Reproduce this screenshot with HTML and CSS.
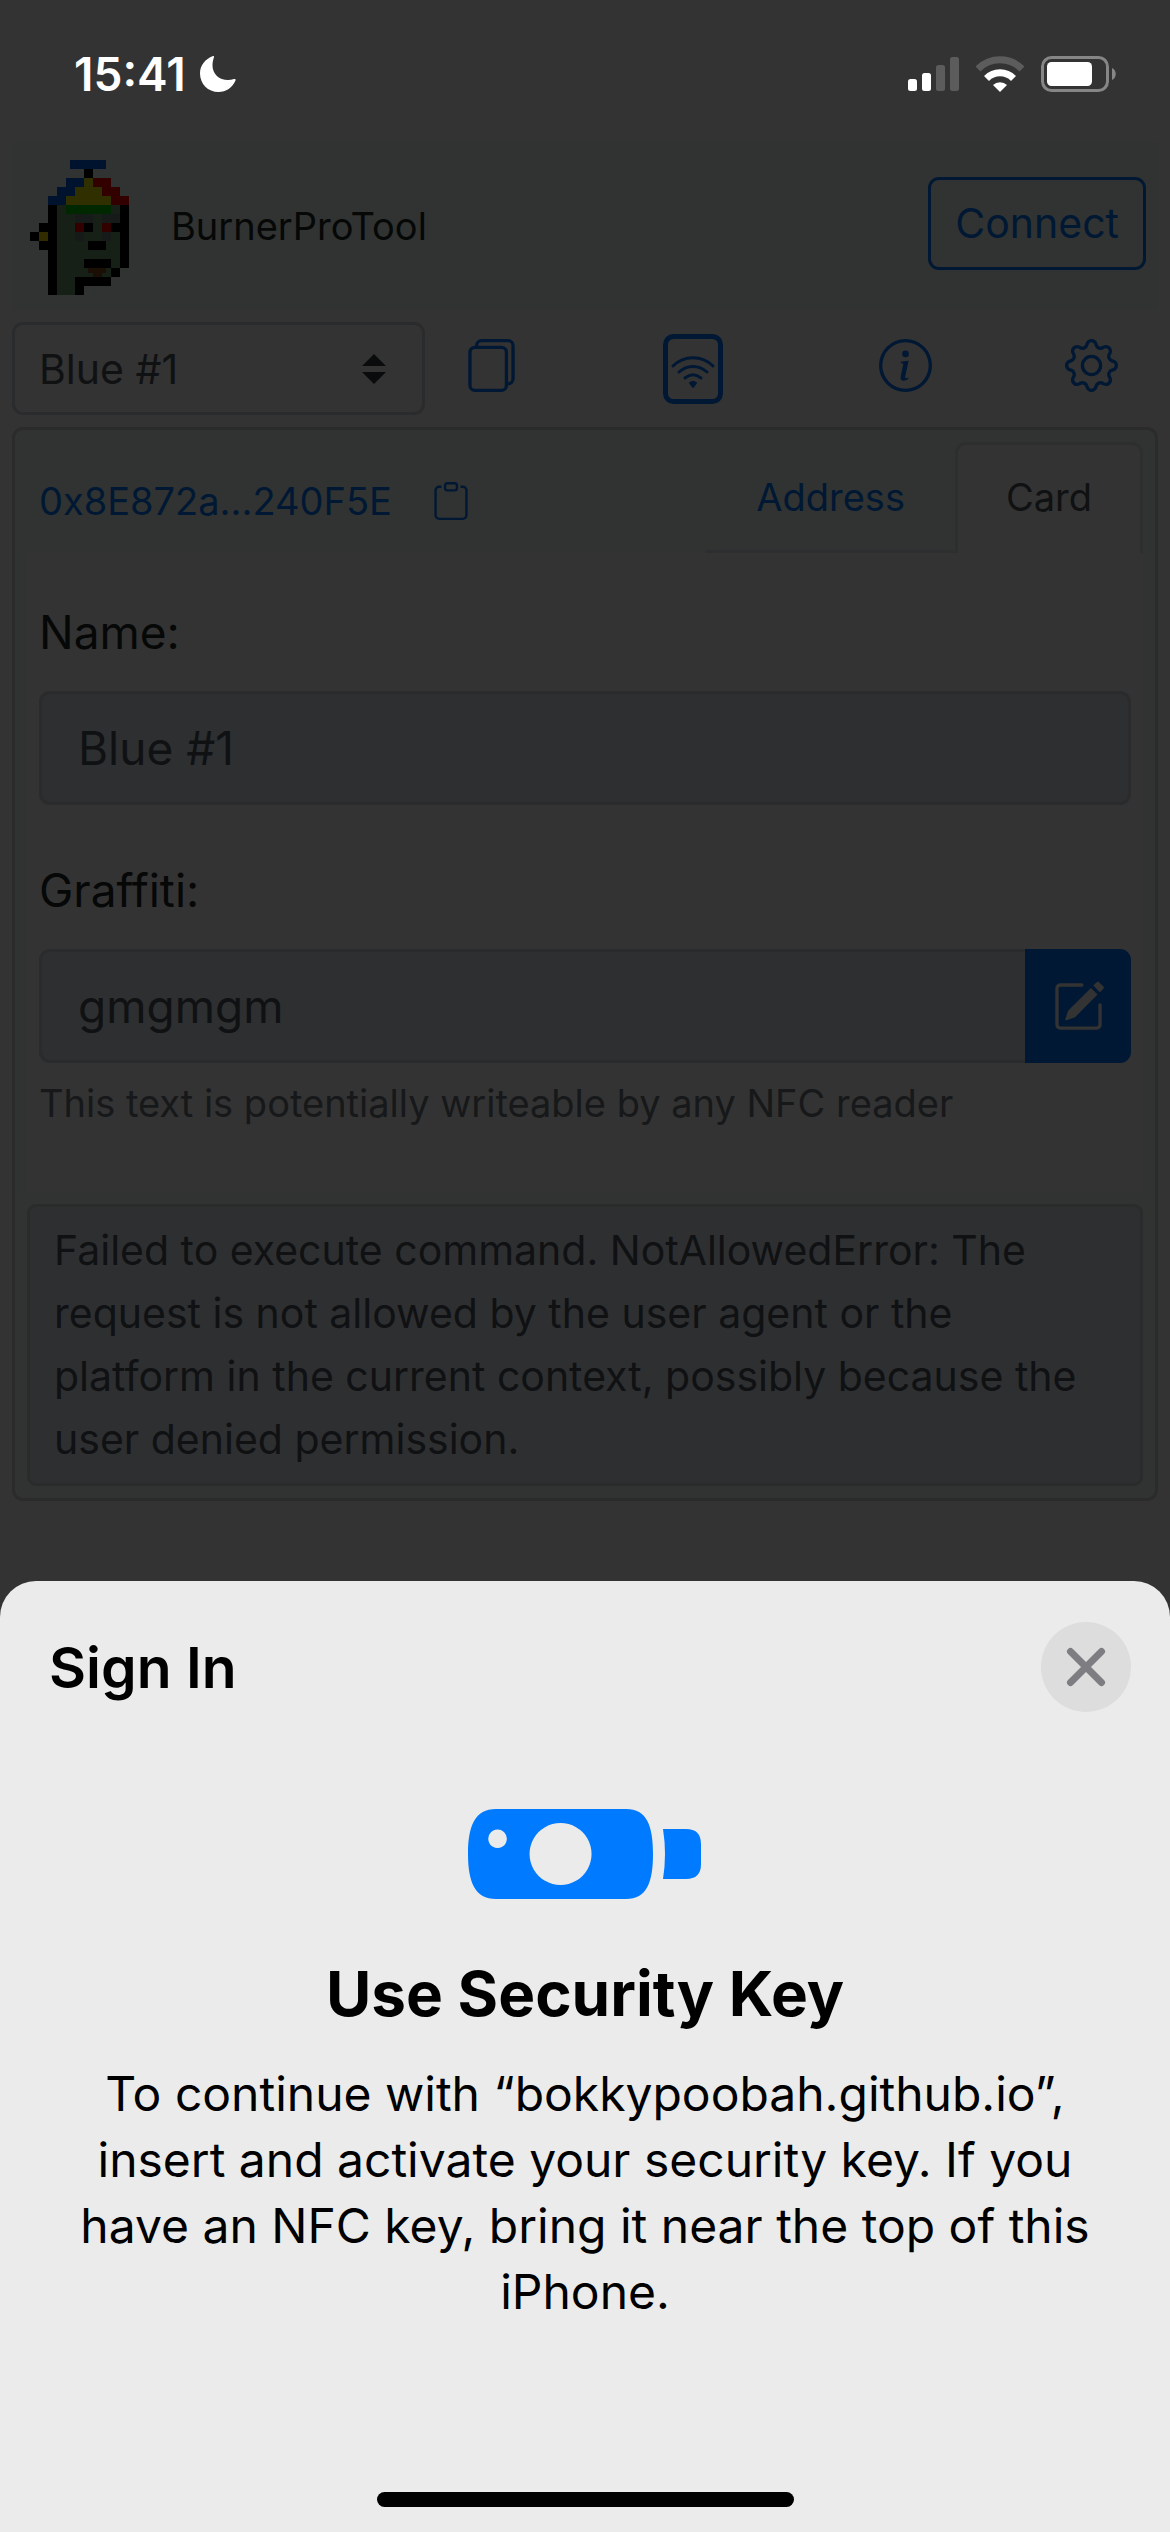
FILE: index.html
```html
<!DOCTYPE html>
<html lang="en">
<head>
<meta charset="utf-8">
<meta name="viewport" content="width=device-width, initial-scale=1">
<title>BurnerProTool</title>
<link rel="stylesheet" href="styles.css">
</head>
<body>
<div class="statusbar">
  <div class="clock">
    <span>15:41</span>
    <svg class="moon" viewBox="0 0 36 36" aria-hidden="true"><path d="M13 0C5 3 0 9.500 0 17.500C0 28 8 36 18.500 36C26 36 32.500 31.500 35.500 24.500c.5-1.200-.2-1.800-1.500-1.400c-2 .6-4 .9-6 .9C19 24 12.500 18 12.500 9.500c0-3 .6-5.500 1.300-7.700.4-1.400.2-2.100-.8-1.800z"/></svg>
  </div>
  <div class="indicators">
    <svg class="signal" viewBox="0 0 51 34" aria-hidden="true">
      <rect x="0" y="22" width="9" height="12" rx="2.500" fill="#fff"/>
      <rect x="14" y="16" width="9" height="18" rx="2.500" fill="#fff"/>
      <rect x="28" y="8" width="9" height="26" rx="2.500" fill="#5c5c5c"/>
      <rect x="42" y="0" width="9" height="34" rx="2.500" fill="#5c5c5c"/>
    </svg>
    <svg class="wifi" viewBox="0 0 48 36" aria-hidden="true">
      <path d="M2 13A31 31 0 0 1 46 13" fill="none" stroke="#5c5c5c" stroke-width="7"/>
      <path d="M10.500 22.500A19 19 0 0 1 37.500 22.500" fill="none" stroke="#fff" stroke-width="7"/>
      <path d="M24 36l-7-7a10 10 0 0 1 14 0z" fill="#fff"/>
    </svg>
    <svg class="battery" viewBox="0 0 75 36" aria-hidden="true">
      <rect x="1.500" y="1.500" width="65" height="33" rx="9" fill="none" stroke="#868686" stroke-width="3"/>
      <rect x="6" y="6" width="45" height="24" rx="4.500" fill="#fff"/>
      <path d="M71 12c5 2 5 10 0 12z" fill="#868686"/>
    </svg>
  </div>
</div>

<main class="app">
  <header class="topbar">
    <svg class="logo" viewBox="30 30 297 405" shape-rendering="crispEdges" role="img" aria-label="Logo">
      <path fill="#172017" d="M111 165h189v189h-27v27H165v54h-54z"/>
      <path fill="#161b19" d="M165 192h54v27h-54zM246 192h54v27h-54zM165 246h27v27h-27zM246 246h27v27h-27z"/>
      <path fill="#00132e" d="M150 30h108v27H150zM138 84h54v27h-54zM111 111h54v27h-54zM84 138h54v27H84z"/>
      <path fill="#2f2f00" d="M192 84h27v27h-27zM165 111h81v27h-81zM138 138h135v27H138z"/>
      <path fill="#330000" d="M219 84h54v27h-54zM246 111h54v27h-54zM273 138h54v27h-54zM165 219h27v27h-27zM246 219h27v27h-27z"/>
      <path fill="#002800" d="M138 165h135v27H138z"/>
      <path fill="#332b00" d="M57 246h27v27H57z"/>
      <path fill="#1b0e04" d="M204 354h54v15h-12v12h-27v-12h-15z"/>
      <path fill="#000" d="M192 57h27v27h-27zM84 165h27v270H84zM300 165h27v189h-27zM57 219h27v27H57zM30 246h27v27H30zM57 273h27v27H57zM192 219h27v27h-27zM273 219h27v27h-27zM204 273h54v27h-54zM192 327h81v27h-81zM273 354h27v27h-27zM165 381h108v27h-81v27h-27z"/>
    </svg>
    <span class="brand">BurnerProTool</span>
    <button class="connect" type="button">Connect</button>
  </header>

  <nav class="toolbar" aria-label="Tools">
    <div class="picker">
      <select aria-label="Card">
        <option>Blue #1</option>
      </select>
      <svg class="arrows" viewBox="0 0 24 30" aria-hidden="true"><path d="M12 0l12 12H0zM0 18h24L12 30z"/></svg>
    </div>
    <div class="tools">
      <button class="tool" type="button" aria-label="Cards"><svg class="icon icon-lines" viewBox="0 0 16 16"><rect x="1.500" y="2.500" width="11" height="13" rx="1.500"/><path d="M3.500 2.500V2A1.500 1.500 0 0 1 5 .5h8A1.500 1.500 0 0 1 14.500 2v10a1.500 1.500 0 0 1-1.500 1.500"/></svg></button>
      <button class="tool" type="button" aria-label="Scan"><svg class="icon-scan" viewBox="0 0 60 70" fill="none" stroke="#001833"><rect x="2.500" y="2.500" width="55" height="65" rx="8" stroke-width="5"/><path d="M10 32C21 21 39 21 50 32M16 38c8-7.500 20-7.500 28 0M22 44c5-4 11-4 16 0" stroke-width="3" stroke-linecap="round"/><path d="M27 49q3-2 6 0l-3 4z" fill="#001833" stroke-width="2" stroke-linejoin="round"/></svg></button>
      <button class="tool" type="button" aria-label="Info"><svg class="icon" viewBox="0 0 16 16"><path d="M8 15A7 7 0 1 1 8 1a7 7 0 0 1 0 14zm0 1A8 8 0 1 0 8 0a8 8 0 0 0 0 16z"/><path d="m8.930 6.588-2.290.287-.082.380.450.083c.294.070.352.176.288.469l-.738 3.468c-.194.897.105 1.319.808 1.319.545 0 1.178-.252 1.465-.598l.088-.416c-.2.176-.492.246-.686.246-.275 0-.375-.193-.304-.533L8.930 6.588zM9 4.500a1 1 0 1 1-2 0 1 1 0 0 1 2 0z"/></svg></button>
      <button class="tool" type="button" aria-label="Settings"><svg class="icon" viewBox="0 0 16 16"><path d="M8 4.754a3.246 3.246 0 1 0 0 6.492 3.246 3.246 0 0 0 0-6.492zM5.754 8a2.246 2.246 0 1 1 4.492 0 2.246 2.246 0 0 1-4.492 0z"/><path d="M9.796 1.343c-.527-1.790-3.065-1.790-3.592 0l-.094.319a.873.873 0 0 1-1.255.520l-.292-.160c-1.640-.892-3.433.902-2.540 2.541l.159.292a.873.873 0 0 1-.520 1.255l-.319.094c-1.790.527-1.790 3.065 0 3.592l.319.094a.873.873 0 0 1 .520 1.255l-.160.292c-.892 1.640.901 3.434 2.541 2.540l.292-.159a.873.873 0 0 1 1.255.520l.094.319c.527 1.790 3.065 1.790 3.592 0l.094-.319a.873.873 0 0 1 1.255-.520l.292.160c1.640.893 3.434-.902 2.540-2.541l-.159-.292a.873.873 0 0 1 .520-1.255l.319-.094c1.790-.527 1.790-3.065 0-3.592l-.319-.094a.873.873 0 0 1-.520-1.255l.160-.292c.893-1.640-.902-3.433-2.541-2.540l-.292.159a.873.873 0 0 1-1.255-.520l-.094-.319zm-2.633.283c.246-.835 1.428-.835 1.674 0l.094.319a1.873 1.873 0 0 0 2.693 1.115l.291-.160c.764-.415 1.600.420 1.184 1.185l-.159.292a1.873 1.873 0 0 0 1.116 2.692l.318.094c.835.246.835 1.428 0 1.674l-.319.094a1.873 1.873 0 0 0-1.115 2.693l.160.291c.415.764-.420 1.600-1.185 1.184l-.291-.159a1.873 1.873 0 0 0-2.693 1.116l-.094.318c-.246.835-1.428.835-1.674 0l-.094-.319a1.873 1.873 0 0 0-2.692-1.115l-.292.160c-.764.415-1.600-.420-1.184-1.185l.159-.291A1.873 1.873 0 0 0 1.945 8.930l-.319-.094c-.835-.246-.835-1.428 0-1.674l.319-.094A1.873 1.873 0 0 0 3.060 4.377l-.160-.292c-.415-.764.420-1.600 1.185-1.184l.292.159a1.873 1.873 0 0 0 2.692-1.115l.094-.319z"/></svg></button>
    </div>
  </nav>

  <section class="card">
    <div class="card-head">
      <a class="address" href="#address">0x8E872a...240F5E</a>
      <button class="tool" type="button" aria-label="Copy address"><svg class="icon-small" viewBox="0 0 16 16"><path d="M4 1.500H3a2 2 0 0 0-2 2V14a2 2 0 0 0 2 2h10a2 2 0 0 0 2-2V3.500a2 2 0 0 0-2-2h-1v1h1a1 1 0 0 1 1 1V14a1 1 0 0 1-1 1H3a1 1 0 0 1-1-1V3.500a1 1 0 0 1 1-1h1v-1z"/><path d="M9.500 1a.5.5 0 0 1 .5.5v1a.5.5 0 0 1-.5.5h-3a.5.5 0 0 1-.5-.5v-1a.5.5 0 0 1 .5-.5h3zm-3-1A1.500 1.500 0 0 0 5 1.500v1A1.500 1.500 0 0 0 6.500 4h3A1.500 1.500 0 0 0 11 2.500v-1A1.500 1.500 0 0 0 9.500 0h-3z"/></svg></button>
      <div class="tabs">
        <a class="tab" href="#address">Address</a>
        <a class="tab tab-active" href="#card" aria-current="page">Card</a>
      </div>
    </div>
    <form class="card-body">
      <label class="label" for="name">Name:</label>
      <input class="field" id="name" type="text" value="Blue #1" readonly>
      <label class="label" for="graffiti">Graffiti:</label>
      <div class="group">
        <input class="field" id="graffiti" type="text" value="gmgmgm" readonly aria-describedby="hint">
        <button class="edit" type="button" aria-label="Edit graffiti"><svg class="icon" viewBox="0 0 16 16"><path d="M15.502 1.940a.5.5 0 0 1 0 .706L14.459 3.690l-2-2L13.502.646a.5.5 0 0 1 .707 0l1.293 1.293zm-1.750 2.456-2-2L4.939 9.210a.5.5 0 0 0-.121.196l-.805 2.414a.25.25 0 0 0 .316.316l2.414-.805a.5.5 0 0 0 .196-.120l6.813-6.814z"/><path d="M1 13.500A1.500 1.500 0 0 0 2.500 15h11a1.500 1.500 0 0 0 1.500-1.500v-6a.5.5 0 0 0-1 0v6a.5.5 0 0 1-.5.5h-11a.5.5 0 0 1-.5-.5v-11a.5.5 0 0 1 .5-.5H9a.5.5 0 0 0 0-1H2.500A1.500 1.500 0 0 0 1 2.500v11z"/></svg></button>
      </div>
      <p class="hint" id="hint">This text is potentially writeable by any NFC reader</p>
    </form>
    <p class="alert" role="alert">Failed to execute command. NotAllowedError: The request is not allowed by the user agent or the platform in the current context, possibly because the user denied permission.</p>
  </section>
</main>

<section class="sheet" role="dialog" aria-labelledby="sheet-title">
  <div class="sheet-head">
    <h1 class="sheet-title" id="sheet-title">Sign In</h1>
    <button class="close" type="button" aria-label="Close"><svg class="cross" viewBox="0 0 40 40" fill="none" stroke="#7e7e82" stroke-width="7" stroke-linecap="round"><path d="M4.500 4.500l31 31M35.500 4.500l-31 31"/></svg></button>
  </div>
  <svg class="key" viewBox="0 0 234 92" fill="#007aff" aria-hidden="true">
    <path fill-rule="evenodd" d="M28 1H158C179 1 185 18 185 46S179 91 158 91H28C7 91 0 74 0 46S7 1 28 1zM92.500 15a31 31 0 1 0 .1 0zM29.500 21.500a9.300 9.300 0 1 0 .1 0z"/>
    <path d="M195 21h23q15 0 15 15v20q0 15-15 15h-23q4-25 0-50z"/>
  </svg>
  <h2 class="heading">Use Security Key</h2>
  <p class="copy">To continue with “bokkypoobah.github.io”, insert and activate your security key. If you have an NFC key, bring it near the top of this iPhone.</p>
  <div class="home"></div>
</section>
</body>
</html>
```
FILE: styles.css
```css
* {
  box-sizing: border-box;
}

body {
  display: flex;
  flex-direction: column;
  min-height: 100vh;
  margin: 0;
  background: #333333;
  color: #060707;
  font-family: Inter, "Liberation Sans", sans-serif;
}

button {
  padding: 0;
  border: 0;
  background: none;
  font: inherit;
  color: inherit;
}

a {
  color: #001833;
  text-decoration: none;
}

svg {
  display: block;
  flex: none;
}

.statusbar {
  display: flex;
  justify-content: space-between;
  align-items: center;
  height: 142px;
  padding: 6px 54px 0 74px;
}

.clock {
  display: flex;
  align-items: center;
  gap: 14px;
  color: #ffffff;
  font-size: 46px;
  font-weight: 600;
}

.moon {
  width: 36px;
  height: 36px;
  fill: #ffffff;
}

.indicators {
  display: flex;
  align-items: center;
  gap: 17px;
}

.signal {
  width: 51px;
  height: 34px;
}

.wifi {
  width: 48px;
  height: 36px;
}

.battery {
  width: 75px;
  height: 36px;
}

.app {
  padding: 0 12px;
}

.topbar {
  display: flex;
  align-items: center;
  height: 168px;
  padding: 0 12px 0 18px;
  background: #303331;
}

.logo {
  width: 99px;
  height: 135px;
  margin-top: 3px;
}

.brand {
  margin-left: 42px;
  font-size: 38px;
}

.connect {
  height: 93px;
  margin: 0 0 6px auto;
  padding: 0 24px;
  border: 3px solid #001833;
  border-radius: 11px;
  color: #001833;
  font-size: 41px;
}

.toolbar {
  display: flex;
  align-items: center;
  padding: 12px 0;
}

.picker {
  display: flex;
  position: relative;
  width: 36%;
}

.picker select {
  flex: 1;
  height: 93px;
  padding: 0 24px;
  border: 3px solid #2a2b2c;
  border-radius: 11px;
  appearance: none;
  background: #333333;
  color: #101112;
  font: inherit;
  font-size: 41px;
}

.arrows {
  position: absolute;
  top: 32px;
  right: 39px;
  width: 24px;
  height: 30px;
  fill: #0a0b0c;
}

.tools {
  display: grid;
  flex: 1;
  grid-template-columns: 198fr 216fr 186fr 53px;
  align-items: center;
  justify-items: start;
  padding: 0 40px;
}

.icon {
  width: 53px;
  height: 53px;
  fill: #001833;
}

.icon-lines {
  fill: none;
  stroke: #001833;
}

.tools .icon {
  margin-bottom: 6px;
}

.icon-scan {
  width: 60px;
  height: 70px;
}

.icon-small {
  width: 38px;
  height: 38px;
  fill: #001833;
}

.card {
  padding: 0 12px 12px;
  border: 3px solid #2b2b2b;
  border-radius: 11px;
  background: #303331;
}

.card-head {
  display: flex;
  align-items: center;
  padding-top: 12px;
}

.address {
  margin: 0 40px 0 12px;
  font-size: 38px;
}

.address,
.card-head .tool {
  padding-top: 6px;
}

.tabs {
  display: flex;
  margin-left: auto;
  font-size: 38px;
}

.tab {
  height: 111px;
  padding: 3px 50px 0;
  border-bottom: 3px solid #2d2e30;
  line-height: 105px;
}

.tab-active {
  padding: 0 48px;
  border: 3px solid #2d2f2f;
  border-bottom: 0;
  border-radius: 11px 11px 0 0;
  background: #333333;
  color: #101112;
}

.card-body {
  display: flex;
  flex-direction: column;
  padding: 45px 12px 60px;
  background: #333333;
}

.label {
  margin-bottom: 24px;
  font-size: 46px;
  line-height: 69px;
}

.field {
  width: 100%;
  height: 114px;
  margin-bottom: 51px;
  padding: 0 36px;
  border: 3px solid #292b2c;
  border-radius: 11px;
  background: #2d2f31;
  color: #101113;
  font: inherit;
  font-size: 46px;
}

.group {
  display: flex;
}

.group .field {
  flex: 1;
  margin: 0;
  border-right: 0;
  border-radius: 11px 0 0 11px;
}

.edit {
  display: grid;
  place-items: center;
  width: 106px;
  border-radius: 0 11px 11px 0;
  background: #001833;
}

.edit .icon {
  fill: #333333;
}

.hint {
  margin: 12px 0 0;
  color: #16181a;
  font-size: 38px;
  line-height: 57px;
}

.alert {
  margin: 12px 0 0;
  padding: 12px 24px;
  border: 3px solid #2a2b2b;
  border-radius: 9px;
  background: #2e2f31;
  color: #101113;
  font-size: 41px;
  line-height: 63px;
}

.sheet {
  display: flex;
  flex: 1;
  flex-direction: column;
  align-items: center;
  margin-top: 80px;
  padding: 41px 39px 25px;
  border-radius: 36px 36px 0 0;
  background: #ebebeb;
  color: #000000;
}

.sheet-head {
  display: flex;
  align-self: stretch;
  justify-content: space-between;
  align-items: center;
  padding-left: 10px;
}

.sheet-title {
  margin: 0;
  font-size: 57px;
  font-weight: 600;
}

.close {
  display: grid;
  place-items: center;
  width: 90px;
  height: 90px;
  border-radius: 50%;
  background: #dddddd;
}

.cross {
  width: 40px;
  height: 40px;
}

.key {
  width: 234px;
  height: 92px;
  margin: 96px 0 54px;
}

.heading {
  margin: 0;
  font-size: 62px;
  font-weight: 700;
  line-height: 80px;
}

.copy {
  max-width: 1040px;
  margin: 27px 0 0;
  font-size: 48px;
  line-height: 66px;
  text-align: center;
}

.home {
  width: 417px;
  height: 15px;
  margin-top: auto;
  border-radius: 8px;
  background: #000000;
}
```
